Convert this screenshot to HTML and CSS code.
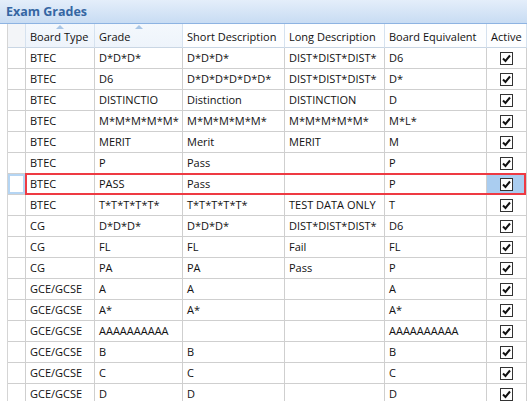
FILE: index.html
```html
<!DOCTYPE html>
<html>
<head>
<meta charset="utf-8">
<link rel="stylesheet" href="styles.css">
</head>
<body>
<div class="panel">
  <div class="title">Exam Grades</div>
  <div class="grid">
    <div class="row head">
      <div class="c rh"></div>
      <div class="c sorted"><span class="arrow"></span>Board Type</div>
      <div class="c sorted"><span class="arrow"></span>Grade</div>
      <div class="c">Short Description</div>
      <div class="c">Long Description</div>
      <div class="c">Board Equivalent</div>
      <div class="c">Active</div>
    </div>
    <div class="row"><div class="c rh"></div><div class="c">BTEC</div><div class="c">D*D*D*</div><div class="c">D*D*D*</div><div class="c">DIST*DIST*DIST*</div><div class="c">D6</div><div class="c chk"><span class="box"><svg viewBox="0 0 11 11"><path d="M2 5.5 L4.5 8 L9 2.5"/></svg></span></div></div>
    <div class="row"><div class="c rh"></div><div class="c">BTEC</div><div class="c">D6</div><div class="c">D*D*D*D*D*D*</div><div class="c">DIST*DIST*DIST*</div><div class="c">D*</div><div class="c chk"><span class="box"><svg viewBox="0 0 11 11"><path d="M2 5.5 L4.5 8 L9 2.5"/></svg></span></div></div>
    <div class="row"><div class="c rh"></div><div class="c">BTEC</div><div class="c">DISTINCTIO</div><div class="c">Distinction</div><div class="c">DISTINCTION</div><div class="c">D</div><div class="c chk"><span class="box"><svg viewBox="0 0 11 11"><path d="M2 5.5 L4.5 8 L9 2.5"/></svg></span></div></div>
    <div class="row"><div class="c rh"></div><div class="c">BTEC</div><div class="c">M*M*M*M*M*</div><div class="c">M*M*M*M*M*</div><div class="c">M*M*M*M*M*</div><div class="c">M*L*</div><div class="c chk"><span class="box"><svg viewBox="0 0 11 11"><path d="M2 5.5 L4.5 8 L9 2.5"/></svg></span></div></div>
    <div class="row"><div class="c rh"></div><div class="c">BTEC</div><div class="c">MERIT</div><div class="c">Merit</div><div class="c">MERIT</div><div class="c">M</div><div class="c chk"><span class="box"><svg viewBox="0 0 11 11"><path d="M2 5.5 L4.5 8 L9 2.5"/></svg></span></div></div>
    <div class="row"><div class="c rh"></div><div class="c">BTEC</div><div class="c">P</div><div class="c">Pass</div><div class="c"></div><div class="c">P</div><div class="c chk"><span class="box"><svg viewBox="0 0 11 11"><path d="M2 5.5 L4.5 8 L9 2.5"/></svg></span></div></div>
    <div class="row selected"><div class="c rh"></div><div class="c">BTEC</div><div class="c">PASS</div><div class="c">Pass</div><div class="c"></div><div class="c">P</div><div class="c chk current"><span class="box"><svg viewBox="0 0 11 11"><path d="M2 5.5 L4.5 8 L9 2.5"/></svg></span></div></div>
    <div class="row"><div class="c rh"></div><div class="c">BTEC</div><div class="c">T*T*T*T*T*</div><div class="c">T*T*T*T*T*</div><div class="c">TEST DATA ONLY</div><div class="c">T</div><div class="c chk"><span class="box"><svg viewBox="0 0 11 11"><path d="M2 5.5 L4.5 8 L9 2.5"/></svg></span></div></div>
    <div class="row"><div class="c rh"></div><div class="c">CG</div><div class="c">D*D*D*</div><div class="c">D*D*D*</div><div class="c">DIST*DIST*DIST*</div><div class="c">D6</div><div class="c chk"><span class="box"><svg viewBox="0 0 11 11"><path d="M2 5.5 L4.5 8 L9 2.5"/></svg></span></div></div>
    <div class="row"><div class="c rh"></div><div class="c">CG</div><div class="c">FL</div><div class="c">FL</div><div class="c">Fail</div><div class="c">FL</div><div class="c chk"><span class="box"><svg viewBox="0 0 11 11"><path d="M2 5.5 L4.5 8 L9 2.5"/></svg></span></div></div>
    <div class="row"><div class="c rh"></div><div class="c">CG</div><div class="c">PA</div><div class="c">PA</div><div class="c">Pass</div><div class="c">P</div><div class="c chk"><span class="box"><svg viewBox="0 0 11 11"><path d="M2 5.5 L4.5 8 L9 2.5"/></svg></span></div></div>
    <div class="row"><div class="c rh"></div><div class="c">GCE/GCSE</div><div class="c">A</div><div class="c">A</div><div class="c"></div><div class="c">A</div><div class="c chk"><span class="box"><svg viewBox="0 0 11 11"><path d="M2 5.5 L4.5 8 L9 2.5"/></svg></span></div></div>
    <div class="row"><div class="c rh"></div><div class="c">GCE/GCSE</div><div class="c">A*</div><div class="c">A*</div><div class="c"></div><div class="c">A*</div><div class="c chk"><span class="box"><svg viewBox="0 0 11 11"><path d="M2 5.5 L4.5 8 L9 2.5"/></svg></span></div></div>
    <div class="row"><div class="c rh"></div><div class="c">GCE/GCSE</div><div class="c">AAAAAAAAAA</div><div class="c"></div><div class="c"></div><div class="c">AAAAAAAAAA</div><div class="c chk"><span class="box"><svg viewBox="0 0 11 11"><path d="M2 5.5 L4.5 8 L9 2.5"/></svg></span></div></div>
    <div class="row"><div class="c rh"></div><div class="c">GCE/GCSE</div><div class="c">B</div><div class="c">B</div><div class="c"></div><div class="c">B</div><div class="c chk"><span class="box"><svg viewBox="0 0 11 11"><path d="M2 5.5 L4.5 8 L9 2.5"/></svg></span></div></div>
    <div class="row"><div class="c rh"></div><div class="c">GCE/GCSE</div><div class="c">C</div><div class="c">C</div><div class="c"></div><div class="c">C</div><div class="c chk"><span class="box"><svg viewBox="0 0 11 11"><path d="M2 5.5 L4.5 8 L9 2.5"/></svg></span></div></div>
    <div class="row"><div class="c rh"></div><div class="c">GCE/GCSE</div><div class="c">D</div><div class="c">D</div><div class="c"></div><div class="c">D</div><div class="c chk"><span class="box"><svg viewBox="0 0 11 11"><path d="M2 5.5 L4.5 8 L9 2.5"/></svg></span></div></div>
  </div>
</div>
</body>
</html>
```

FILE: styles.css
```css
html, body {
  margin: 0;
  padding: 0;
  background: #ffffff;
}
body {
  width: 527px;
  height: 401px;
  overflow: hidden;
  font-family: "Open Sans", "Noto Sans", sans-serif;
  font-size: 11px;
  color: #111;
}
.panel {
  display: flex;
  flex-direction: column;
}
.title {
  height: 23px;
  line-height: 23px;
  padding-left: 6px;
  font-weight: bold;
  font-size: 12.5px;
  color: #3566a3;
  background: linear-gradient(#e4eefa, #c8dcf3);
  border-bottom: 1px solid #8db3e2;
}
.grid {
  display: flex;
  flex-direction: column;
  margin-left: 7px;
  border-left: 1px solid #d5d5d5;
}
.row {
  display: grid;
  grid-template-columns: 18px 69px 88px 102px 100px 102px 40px;
  height: 21px;
  position: relative;
}
.c {
  box-sizing: border-box;
  border-right: 1px solid #cfcfcf;
  border-bottom: 1px solid #cfcfcf;
  padding-left: 4px;
  line-height: 20px;
  white-space: nowrap;
  overflow: hidden;
}
.rh {
  padding: 0;
}
.head {
  height: 24px;
}
.head .c {
  line-height: 25px;
  position: relative;
  border-right: 1px solid #d6e2ef;
  border-bottom: 1px solid #c9d6e4;
  background: #fdfeff;
}
.head .c.sorted {
  background: linear-gradient(#f4f8fd, #eef4fb);
}
.head .rh {
  background: #f3f5f8;
}
.arrow {
  position: absolute;
  left: 50%;
  top: 1px;
  margin-left: -4px;
  width: 0;
  height: 0;
  border-left: 4px solid transparent;
  border-right: 4px solid transparent;
  border-bottom: 4px solid #a9c6e6;
}
.chk {
  display: flex;
  align-items: center;
  justify-content: center;
  padding: 0;
}
.box {
  box-sizing: border-box;
  width: 13px;
  height: 13px;
  border: 1px solid #333;
  background: #fff;
  display: flex;
}
.box svg {
  width: 11px;
  height: 11px;
  fill: none;
  stroke: #111;
  stroke-width: 2;
}
.current {
  background: #aacdf0;
}
.selected .rh {
  box-shadow: inset 0 0 0 2px #b5d5f3;
}
.selected::after {
  content: "";
  position: absolute;
  left: 17px;
  right: 1px;
  top: -1px;
  bottom: 0;
  border: 2px solid #ee3a43;
  pointer-events: none;
}
```
